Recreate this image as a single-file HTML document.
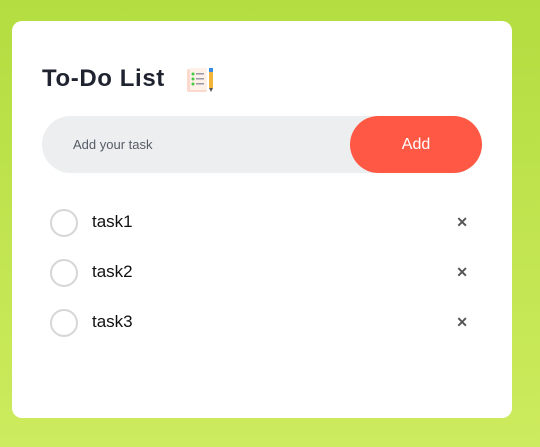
<!DOCTYPE html>
<html><head><style>
body{margin:0;width:540px;height:447px;overflow:hidden;background:linear-gradient(180deg,#b3dd40,#cdeb5e);font-family:"Liberation Sans",sans-serif;}
.card{position:absolute;left:12px;top:21px;width:500px;height:397px;background:#fff;border-radius:10px;}
h2{position:absolute;left:30px;top:44px;margin:0;font-size:24px;font-weight:bold;color:#1f2330;letter-spacing:0.6px;}
.inp{position:absolute;left:30px;top:95px;width:440px;height:57px;background:#edeef0;border-radius:29px;}
.inp span{position:absolute;left:31px;top:21px;font-size:13px;color:#555c66;}
.btn{position:absolute;right:0;top:0;width:132px;height:57px;background:#ff5945;border-radius:29px;color:#fff;font-size:16px;text-align:center;line-height:57px;}
.item{position:absolute;left:38px;height:28px;width:420px;}
.c{position:absolute;left:0;top:0;width:24px;height:24px;border:2px solid #d6d6d6;border-radius:50%;}
.t{position:absolute;left:42px;top:3px;font-size:17px;color:#111;}
.x{position:absolute;right:2px;top:5px;font-size:14px;font-weight:bold;color:#555;}
</style></head><body>
<div class="card">
<h2>To-Do List</h2>
<svg style="position:absolute;left:174px;top:45px" width="30" height="28" viewBox="0 0 30 28">
<rect x="1" y="3" width="20" height="23" rx="2" fill="#fbd9cc"/>
<rect x="4" y="2" width="17" height="22" fill="#fff0e8"/>
<circle cx="7" cy="8" r="1.5" fill="#4c4"/><rect x="10" y="7" width="8" height="1.5" fill="#99a"/>
<circle cx="7" cy="13" r="1.5" fill="#4c4"/><rect x="10" y="12" width="8" height="1.5" fill="#99a"/>
<circle cx="7" cy="18" r="1.5" fill="#4c4"/><rect x="10" y="17" width="8" height="1.5" fill="#99a"/>
<rect x="23" y="2" width="4" height="4" fill="#3a8ae0"/><rect x="23" y="6" width="4" height="16" fill="#f2b53a"/><path d="M23 22h4l-2 4z" fill="#555"/>
</svg>
<div class="inp"><span>Add your task</span><div class="btn">Add</div></div>
<div class="item" style="top:188px"><div class="c"></div><div class="t">task1</div><div class="x">✕</div></div>
<div class="item" style="top:238px"><div class="c"></div><div class="t">task2</div><div class="x">✕</div></div>
<div class="item" style="top:288px"><div class="c"></div><div class="t">task3</div><div class="x">✕</div></div>
</div>
</body></html>
